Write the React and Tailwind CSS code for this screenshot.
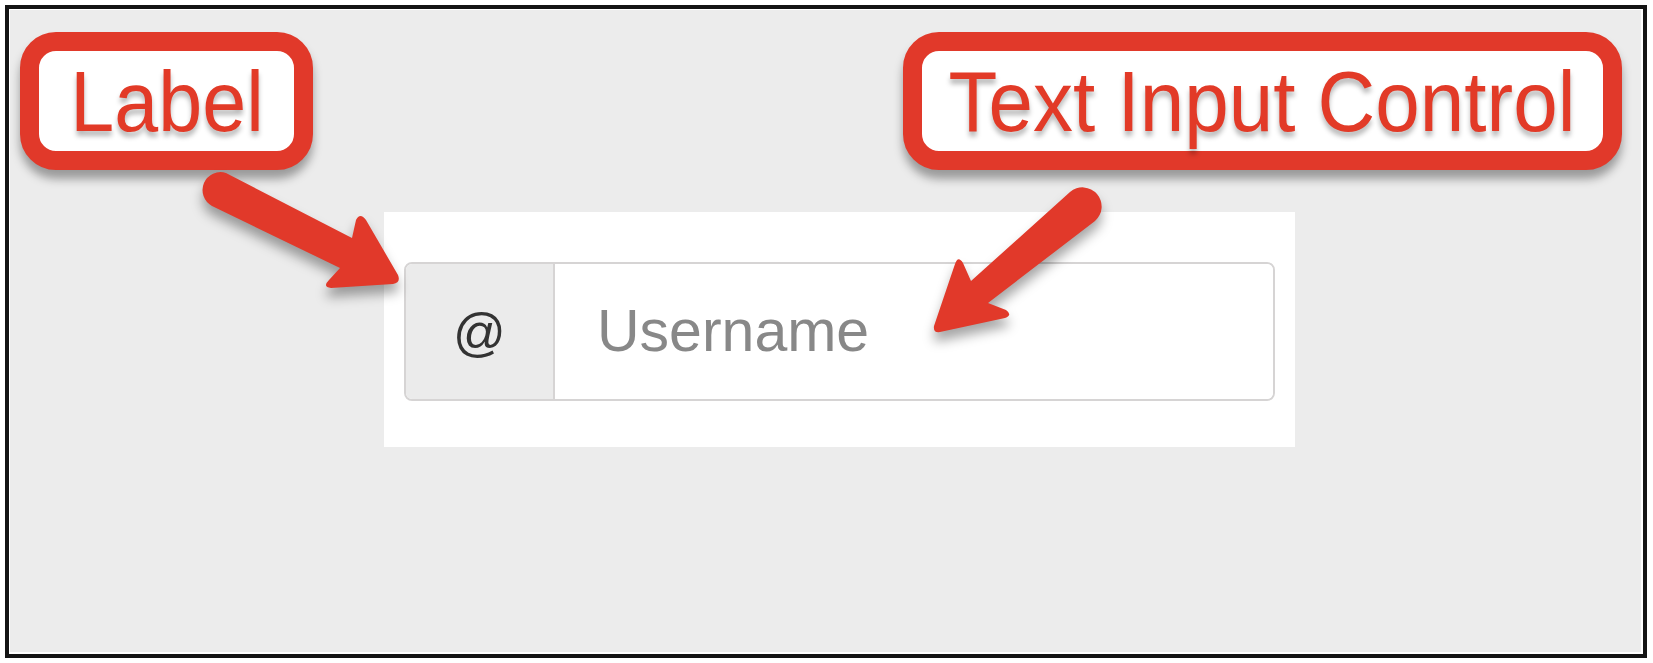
import React from 'react';

const RED = '#e1392a';

const Callout = ({ className, textClass, children }) => (
    <div className={`absolute flex items-center justify-center rounded-[36px] border-[19px] border-[#e1392a] bg-white shadow-[0_9px_10px_rgba(0,0,0,0.35)] ${className}`}>
        <div className={`whitespace-nowrap leading-none text-[#e23a27] [text-shadow:0_5px_5px_rgba(0,0,0,0.28)] ${textClass}`}>
            {children}
        </div>
    </div>
);

const Arrows = () => (
    <svg
        className="absolute left-0 top-0 pointer-events-none drop-shadow-[0_9px_6px_rgba(0,0,0,0.35)]"
        width="1653"
        height="663"
        viewBox="0 0 1653 663"
    >
        {/* arrow pointing at the addon */}
        <path
            fill={RED}
            d="M 226 173 L 352 238 L 356 220 Q 360 212 366 220 L 398 275 Q 401 283 393 284 L 331 288 Q 322 287 329 280 L 340 268 L 212 206 A 18 18 0 0 1 226 173 Z"
        />
        {/* arrow pointing at the input */}
        <path
            fill={RED}
            d="M 1070 192 L 971 281 L 963 263 Q 958 255 955 264 L 934 326 Q 933 333 940 332 L 1005 318 Q 1013 315 1006 310 L 988 303 L 1095 221 A 17 17 0 0 0 1070 192 Z"
        />
    </svg>
);

const App = () => {
    return (
        <div className="relative w-[1653px] h-[663px] bg-white pt-[5px] pl-[5px] font-['Liberation_Sans',Arial,sans-serif]">
            {/* Frame */}
            <div className="w-[1642px] h-[653px] border-4 border-[#141414] bg-[#ececec] shadow-[inset_1px_1px_0_#fff,inset_-2px_-2px_0_#fff] pt-[203px] pl-[375px]">
                {/* Sample form panel */}
                <div className="w-[911px] h-[235px] bg-white px-[20px] pt-[50px]">
                    <div className="flex w-[871px] h-[139px] rounded-[8px] border-2 border-[#d6d4d4] overflow-hidden">
                        <span className="flex w-[149px] items-center justify-center bg-[#ebebeb] border-r-2 border-[#d6d4d4] text-[52px] text-[#333]">
                            @
                        </span>
                        <input
                            type="text"
                            placeholder="Username"
                            className="flex-1 min-w-0 bg-white pl-[42px] text-[59px] text-[#555] placeholder:text-[#888] outline-none"
                        />
                    </div>
                </div>
            </div>

            {/* Annotations */}
            <Callout className="left-[20px] top-[32px] w-[293px] h-[138px]" textClass="text-[85px] scale-x-[0.93]">
                Label
            </Callout>
            <Callout className="left-[903px] top-[32px] w-[719px] h-[138px]" textClass="text-[86px] scale-x-[0.93]">
                Text Input Control
            </Callout>
            <Arrows />
        </div>
    );
};

export default App;
